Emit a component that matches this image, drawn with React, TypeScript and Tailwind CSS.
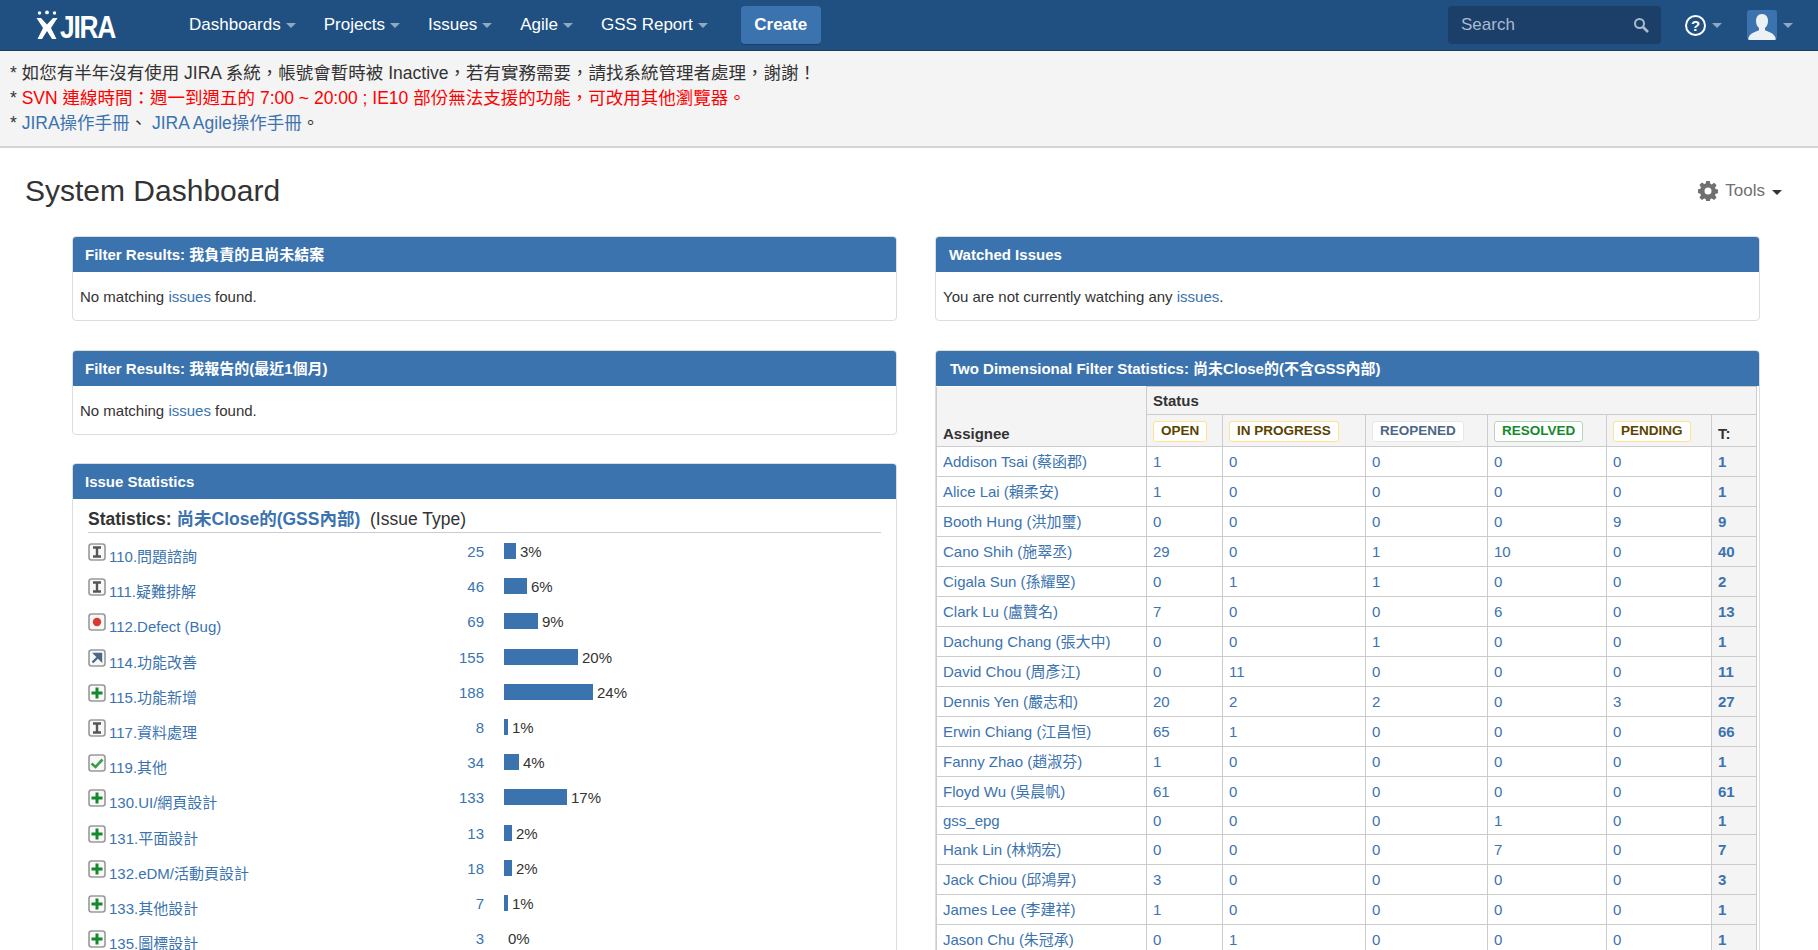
import React from "react";

const FONT = "font-['Liberation_Sans','Noto_Sans_CJK_TC',sans-serif]";

function Caret({ className = "" }: { className?: string }) {
  return (
    <span
      className={`inline-block w-0 h-0 border-x-[5px] border-x-transparent border-t-[5px] ${className}`}
    />
  );
}

function Logo() {
  return (
    <div className="flex items-center w-[81px] h-[30px] shrink-0">
      <svg width="25" height="30" viewBox="0 0 24 30" className="shrink-0">
        <circle cx="4" cy="3" r="1.7" fill="#fff" />
        <circle cx="11.5" cy="2.4" r="1.9" fill="#fff" />
        <circle cx="19" cy="3" r="1.7" fill="#fff" />
        <path d="M1 8h4.5l6 6.5L17.5 8H22l-6.5 10L21 29h-4.5l-5-8-5 8H2l5.5-11Z" fill="#fff" />
      </svg>
      <span className="text-[31px] leading-none font-bold text-white tracking-[-1.5px] scale-x-[0.85] origin-left inline-block mt-[5px]">
        JIRA
      </span>
    </div>
  );
}

function NavItem({ label }: { label: string }) {
  return (
    <div className="flex items-center gap-[5px] text-white text-[17px] leading-none mt-[-2px]">
      <span>{label}</span>
      <Caret className="border-t-white/50 mt-[2px]" />
    </div>
  );
}

function Header() {
  return (
    <header className="h-[51px] bg-[#205081] border-b border-[#1a3a5c] flex items-center pl-[35px] pr-[25px] shrink-0">
      <Logo />
      <nav className="flex items-center ml-[73px] gap-[28px]">
        <NavItem label="Dashboards" />
        <NavItem label="Projects" />
        <NavItem label="Issues" />
        <NavItem label="Agile" />
        <NavItem label="GSS Report" />
      </nav>
      <button className="ml-[33px] w-[80px] h-[38px] rounded-[4px] bg-[#3b73af] text-white font-bold text-[17px] shadow-[0_1px_0_rgba(0,0,0,0.2)]">
        Create
      </button>
      <div className="ml-auto flex items-center">
        <div className="w-[213px] h-[38px] rounded-[4px] bg-[#1b3f68] flex items-center justify-between pl-[13px] pr-[12px] text-[17px] text-[#a9bbcf]">
          <span>Search</span>
          <svg width="16" height="16" viewBox="0 0 16 16" fill="none" stroke="#a9bbcf" strokeWidth="2">
            <circle cx="6.5" cy="6.5" r="4.5" />
            <path d="M10 10l5 5" strokeWidth="2.6" />
          </svg>
        </div>
        <div className="ml-[24px] w-[21px] h-[21px] rounded-full border-[2.5px] border-white flex items-center justify-center text-white text-[15px] font-bold leading-none">
          ?
        </div>
        <Caret className="border-t-white/50 ml-[6px]" />
        <div className="ml-[25px] w-[30px] h-[30px] rounded-[3px] bg-[#3b73af] overflow-hidden">
          <svg width="30" height="30" viewBox="0 0 30 30">
            <path d="M15 4c4 0 6 3 6 7 0 3-1 5-3 7v2c2 2 10 2 11 10H1c1-8 9-8 11-10v-2c-2-2-3-4-3-7 0-4 2-7 6-7Z" fill="#eef1f4" />
          </svg>
        </div>
        <Caret className="border-t-white/50 ml-[6px]" />
      </div>
    </header>
  );
}

function Banner() {
  return (
    <div className="h-[97px] bg-[#f4f4f4] border-b-2 border-[#d4d4d4] pl-[10px] pt-[10px] text-[17.5px] leading-[25px] text-[#333] shrink-0">
      <div>* 如您有半年沒有使用 JIRA 系統，帳號會暫時被 Inactive，若有實務需要，請找系統管理者處理，謝謝！</div>
      <div>
        * <span className="text-[#ff0000]">SVN 連線時間：週一到週五的 7:00 ~ 20:00 ; IE10 部份無法支援的功能，可改用其他瀏覽器。</span>
      </div>
      <div>
        * <a className="text-[#3b73af]">JIRA操作手冊</a>、 <a className="text-[#3b73af]">JIRA Agile操作手冊</a>。
      </div>
    </div>
  );
}

function Panel({ title, children, pl = "pl-[13px]", mb = "" }: { title: string; children: React.ReactNode; pl?: string; mb?: string }) {
  return (
    <section className={`border border-[#dddddd] rounded-[4px] overflow-hidden bg-white ${mb}`}>
      <h3 className={`h-[35px] pt-[1px] bg-[#3b73af] text-white font-bold text-[15px] flex items-center ${pl}`}>{title}</h3>
      {children}
    </section>
  );
}

function IssueIcon({ kind }: { kind: string }) {
  let glyph: React.ReactNode = null;
  if (kind === "i")
    glyph = <path d="M5 4.5h8M5 13.5h8M9 4.5v9" stroke="#555" strokeWidth="2.4" fill="none" />;
  if (kind === "bug") glyph = <circle cx="9" cy="9" r="4.2" fill="#d9392f" />;
  if (kind === "up")
    glyph = <path d="M4.5 13.5 11.5 6.5M7 5h6v6Z" stroke="#4a6785" strokeWidth="2.4" fill="#4a6785" />;
  if (kind === "plus")
    glyph = <path d="M9 3.5v11M3.5 9h11" stroke="#14892c" strokeWidth="3" fill="none" />;
  if (kind === "check")
    glyph = <path d="M3.5 9.5 7.5 13l7-7.5" stroke="#3f9a4f" strokeWidth="2.6" fill="none" />;
  return (
    <svg width="18" height="18" viewBox="0 0 18 18" className="shrink-0">
      <rect x="1" y="1" width="16" height="16" rx="2.5" fill="#f8f8f8" stroke="#999" strokeWidth="1.6" />
      {glyph}
    </svg>
  );
}

const stats: [string, string, number, string, number][] = [
  ["i", "110.問題諮詢", 25, "3%", 12],
  ["i", "111.疑難排解", 46, "6%", 23],
  ["bug", "112.Defect (Bug)", 69, "9%", 34],
  ["up", "114.功能改善", 155, "20%", 74],
  ["plus", "115.功能新增", 188, "24%", 89],
  ["i", "117.資料處理", 8, "1%", 4],
  ["check", "119.其他", 34, "4%", 15],
  ["plus", "130.UI/網頁設計", 133, "17%", 63],
  ["plus", "131.平面設計", 13, "2%", 8],
  ["plus", "132.eDM/活動頁設計", 18, "2%", 8],
  ["plus", "133.其他設計", 7, "1%", 4],
  ["plus", "135.圖標設計", 3, "0%", 0],
];

function Stats() {
  return (
    <div className="pl-[15px] pr-[15px]">
      <div className="h-[34px] pt-[10px] border-b border-[#cccccc] text-[#333] text-[17.5px] leading-[20px] whitespace-pre">
        <b>Statistics:</b> <a className="text-[#3b73af] font-bold">尚未Close的(GSS內部)</a>  (Issue Type)
      </div>
      <div className="pt-[10px]">
        {stats.map(([k, label, n, pct, w]) => (
          <div key={label} className="h-[35.2px] flex items-start text-[15px] leading-[18px]">
            <div className="w-[288px] flex items-start">
              <IssueIcon kind={k} />
              <a className="text-[#3b73af] mt-[5px] ml-[3px] whitespace-nowrap">{label}</a>
            </div>
            <a className="w-[108px] text-right text-[#3b73af]">{n}</a>
            <div className="ml-[20px] flex items-start">
              {w > 0 && <div className="h-[16px] bg-[#3b73af]" style={{ width: w }} />}
              <span className="ml-[4px] text-[#333]">{pct}</span>
            </div>
          </div>
        ))}
      </div>
    </div>
  );
}

function Badge({ label, cls }: { label: string; cls: string }) {
  return (
    <span className={`inline-block h-[21px] leading-[18px] px-[7px] rounded-[3px] border bg-white font-bold text-[13.5px] whitespace-nowrap ${cls}`}>
      {label}
    </span>
  );
}

const rows: [string, number, number, number, number, number, number][] = [
  ["Addison Tsai (蔡函郡)", 1, 0, 0, 0, 0, 1],
  ["Alice Lai (賴柔安)", 1, 0, 0, 0, 0, 1],
  ["Booth Hung (洪加璽)", 0, 0, 0, 0, 9, 9],
  ["Cano Shih (施翠丞)", 29, 0, 1, 10, 0, 40],
  ["Cigala Sun (孫耀堅)", 0, 1, 1, 0, 0, 2],
  ["Clark Lu (盧贊名)", 7, 0, 0, 6, 0, 13],
  ["Dachung Chang (張大中)", 0, 0, 1, 0, 0, 1],
  ["David Chou (周彥江)", 0, 11, 0, 0, 0, 11],
  ["Dennis Yen (嚴志和)", 20, 2, 2, 0, 3, 27],
  ["Erwin Chiang (江昌恒)", 65, 1, 0, 0, 0, 66],
  ["Fanny Zhao (趙淑芬)", 1, 0, 0, 0, 0, 1],
  ["Floyd Wu (吳晨帆)", 61, 0, 0, 0, 0, 61],
  ["gss_epg", 0, 0, 0, 1, 0, 1],
  ["Hank Lin (林炳宏)", 0, 0, 0, 7, 0, 7],
  ["Jack Chiou (邱鴻昇)", 3, 0, 0, 0, 0, 3],
  ["James Lee (李建祥)", 1, 0, 0, 0, 0, 1],
  ["Jason Chu (朱冠承)", 0, 1, 0, 0, 0, 1],
];

function TwoD() {
  const th = "border border-[#cccccc] bg-[#f4f4f4] text-left font-bold text-[#333] px-[6px]";
  const td = "border border-[#cccccc] px-[6px] text-[#3b73af]";
  return (
    <table className="border-collapse table-fixed w-[820px] text-[15px] leading-[20px]">
      <colgroup>
        <col className="w-[210px]" />
        <col className="w-[76px]" />
        <col className="w-[143px]" />
        <col className="w-[122px]" />
        <col className="w-[119px]" />
        <col className="w-[105px]" />
        <col className="w-[45px]" />
      </colgroup>
      <thead>
        <tr className="h-[28px]">
          <th className={`${th} border-t-0 border-b-0`} />
          <th className={th} colSpan={6}>Status</th>
        </tr>
        <tr className="h-[32px]">
          <th className={`${th} border-t-0 align-bottom pb-[2px]`}>Assignee</th>
          <th className={`${th} align-top pt-[5px]`}><Badge label="OPEN" cls="border-[#ffe28c] text-[#594300]" /></th>
          <th className={`${th} align-top pt-[5px]`}><Badge label="IN PROGRESS" cls="border-[#ffe28c] text-[#594300]" /></th>
          <th className={`${th} align-top pt-[5px]`}><Badge label="REOPENED" cls="border-[#e4e8ed] text-[#4a6785]" /></th>
          <th className={`${th} align-top pt-[5px]`}><Badge label="RESOLVED" cls="border-[#b2d8b9] text-[#14892c]" /></th>
          <th className={`${th} align-top pt-[5px]`}><Badge label="PENDING" cls="border-[#ffe28c] text-[#594300]" /></th>
          <th className={`${th} align-bottom pb-[2px]`}>T:</th>
        </tr>
      </thead>
      <tbody>
        {rows.map((r) => (
          <tr key={r[0]} className={r[0] === "gss_epg" ? "h-[28.4px]" : "h-[30px]"}>
            <td className={`${td} whitespace-nowrap`}>{r[0]}</td>
            {r.slice(1, 6).map((v, i) => (
              <td key={i} className={td}>{v}</td>
            ))}
            <td className={`${td} bg-[#f4f4f4] font-bold`}>{r[6]}</td>
          </tr>
        ))}
      </tbody>
    </table>
  );
}

function NoMatch({ text }: { text: React.ReactNode }) {
  return <div className="h-[48px] pl-[7px] pt-[15px] text-[15px] leading-[20px] text-[#333]">{text}</div>;
}

export default function App() {
  const issues = <a className="text-[#3b73af]">issues</a>;
  return (
    <div className={`h-[950px] overflow-hidden flex flex-col bg-white ${FONT}`}>
      <Header />
      <Banner />
      <div className="flex items-center justify-between h-[88px] pl-[25px] pr-[36px] shrink-0">
        <h1 className="text-[30px] leading-none text-[#333] font-normal mt-[-2px]">System Dashboard</h1>
        <div className="flex items-center text-[17px] text-[#707070] mt-[-2px]">
          <svg width="20" height="20" viewBox="0 0 20 20" className="mr-[7px]">
            <path
              fillRule="evenodd"
              fill="#707070"
              d="M8.2 0h3.6l.5 2.8 1.5.6 2.3-1.6 2.5 2.5-1.6 2.3.6 1.5 2.8.5v3.6l-2.8.5-.6 1.5 1.6 2.3-2.5 2.5-2.3-1.6-1.5.6-.5 2.8H8.2l-.5-2.8-1.5-.6-2.3 1.6-2.5-2.5 1.6-2.3-.6-1.5L-.4 11.8V8.2l2.8-.5.6-1.5-1.6-2.3 2.5-2.5 2.3 1.6 1.5-.6ZM10 6.5a3.5 3.5 0 1 0 0 7 3.5 3.5 0 0 0 0-7Z"
            />
          </svg>
          <span>Tools</span>
          <Caret className="border-t-[#333] ml-[7px] mt-[2px]" />
        </div>
      </div>
      <div className="flex pl-[72px] pr-[58px] gap-[38px] items-start">
        <div className="w-[825px] flex flex-col gap-[28px] shrink-0">
          <Panel title="Filter Results: 我負責的且尚未結案" pl="pl-[12px]" mb="mb-[1px]">
            <NoMatch text={<>No matching {issues} found.</>} />
          </Panel>
          <Panel title="Filter Results: 我報告的(最近1個月)" pl="pl-[12px]">
            <NoMatch text={<>No matching {issues} found.</>} />
          </Panel>
          <Panel title="Issue Statistics" pl="pl-[12px]">
            <Stats />
          </Panel>
        </div>
        <div className="w-[825px] flex flex-col gap-[28px] shrink-0">
          <Panel title="Watched Issues" mb="mb-[1px]">
            <NoMatch text={<>You are not currently watching any {issues}.</>} />
          </Panel>
          <Panel title="Two Dimensional Filter Statistics: 尚未Close的(不含GSS內部)" pl="pl-[14px]">
            <TwoD />
          </Panel>
        </div>
      </div>
    </div>
  );
}
